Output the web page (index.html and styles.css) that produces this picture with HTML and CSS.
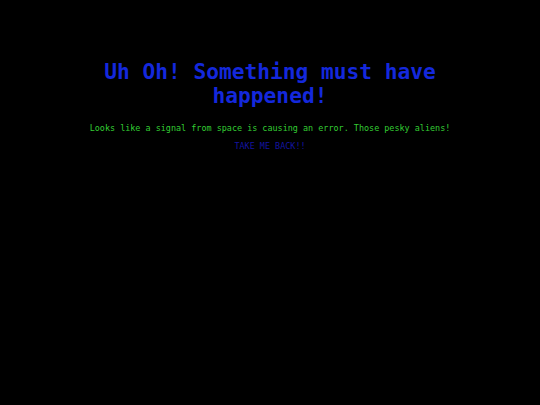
FILE: index.html
```html
<!DOCTYPE html>
<html>
<head>
<meta charset="utf-8">
<link rel="stylesheet" href="styles.css">
</head>
<body>
<main class="page">
  <h1 class="title">Uh Oh! Something must have happened!</h1>
  <p class="message">Looks like a signal from space is causing an error. Those pesky aliens!</p>
  <a class="back" href="#">TAKE ME BACK!!</a>
</main>
</body>
</html>
```
FILE: styles.css
```css
html, body {
  margin: 0;
  background: #000;
}
.page {
  display: flex;
  flex-direction: column;
  align-items: center;
  padding-top: 60px;
  font-family: "DejaVu Sans Mono", monospace;
  text-align: center;
}
.title {
  margin: 0;
  width: 400px;
  font-size: 21.2px;
  line-height: 24px;
  font-weight: bold;
  color: #1428dc;
}
.message {
  margin: 15px 0 0;
  font-size: 8.45px;
  line-height: 10px;
  color: #33cc33;
  white-space: nowrap;
}
.back {
  margin-top: 8px;
  font-size: 8.45px;
  line-height: 10px;
  color: #1414a0;
  text-decoration: none;
}
```
